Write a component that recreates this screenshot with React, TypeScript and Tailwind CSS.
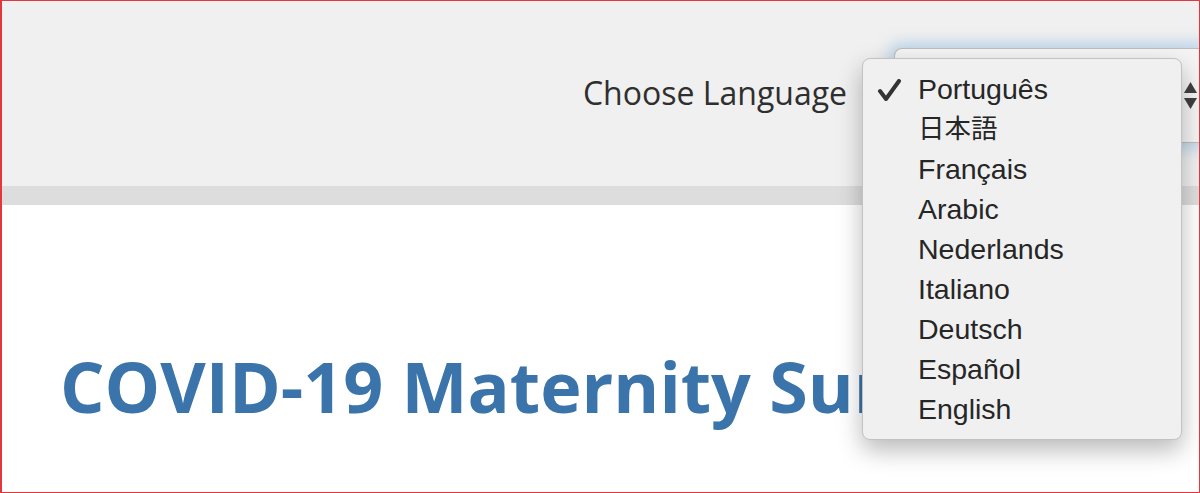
import React from "react";

const languages = [
  "Português",
  "日本語",
  "Français",
  "Arabic",
  "Nederlands",
  "Italiano",
  "Deutsch",
  "Español",
  "English",
];

export default function App() {
  return (
    <div className="relative w-[1200px] h-[493px] overflow-hidden bg-white border border-l-2 border-[#e2383d]">
      {/* header */}
      <div className="h-[185px] bg-[#f0f0f0] flex justify-end items-start pt-[47px]">
        <div
          className="mt-[23px] mr-[47px] text-[32px] leading-[44px] text-[#2f2f2f]"
          style={{ fontFamily: '"Open Sans", sans-serif' }}
        >
          Choose Language
        </div>
        <div className="w-[305px] h-[95px] rounded-l-[8px] border border-r-0 border-[#bdbdbd] bg-[#f4f4f4] shadow-[0_0_14px_6px_rgba(140,185,225,0.5)] flex justify-end items-center pr-[2px]">
          <svg width="13" height="27" viewBox="0 0 13 27">
            <polygon points="6.5,0 13,11 0,11" fill="#404040" />
            <polygon points="0,16 13,16 6.5,27" fill="#404040" />
          </svg>
        </div>
      </div>
      {/* band */}
      <div className="h-[19px] bg-[#dddddd]" />
      {/* main */}
      <div className="pt-[133px] pl-[58px]">
        <h1
          className="w-[802px] overflow-hidden text-[70px] leading-[96px] font-bold text-[#3a74aa] whitespace-nowrap"
          style={{ fontFamily: '"Open Sans", sans-serif' }}
        >
          COVID-19 Maternity Survey
        </h1>
      </div>
      {/* dropdown menu */}
      <div className="absolute left-[860px] top-[57px] w-[320px] h-[382px] rounded-[8px] bg-[#f0f0f0] border border-[#c2c2c2] shadow-[0_10px_24px_rgba(0,0,0,0.28)] pt-[10px]">
        {languages.map((lang, i) => (
          <div key={lang} className="relative h-[40px] flex items-center pl-[55px]">
            {i === 0 && (
              <svg
                className="absolute left-[14px] top-[10px]"
                width="24"
                height="23"
                viewBox="0 0 24 23"
              >
                <path
                  d="M3 12 L9 20 L22 2"
                  fill="none"
                  stroke="#333"
                  strokeWidth="4"
                  strokeLinecap="round"
                  strokeLinejoin="round"
                />
              </svg>
            )}
            <span
              className="text-[28.5px] leading-[40px] text-[#262626]"
              style={{
                fontFamily:
                  '"Liberation Sans", "Noto Sans CJK JP", Arial, sans-serif',
                fontSize: lang === "日本語" ? "26.5px" : undefined,
              }}
            >
              {lang}
            </span>
          </div>
        ))}
      </div>
    </div>
  );
}
